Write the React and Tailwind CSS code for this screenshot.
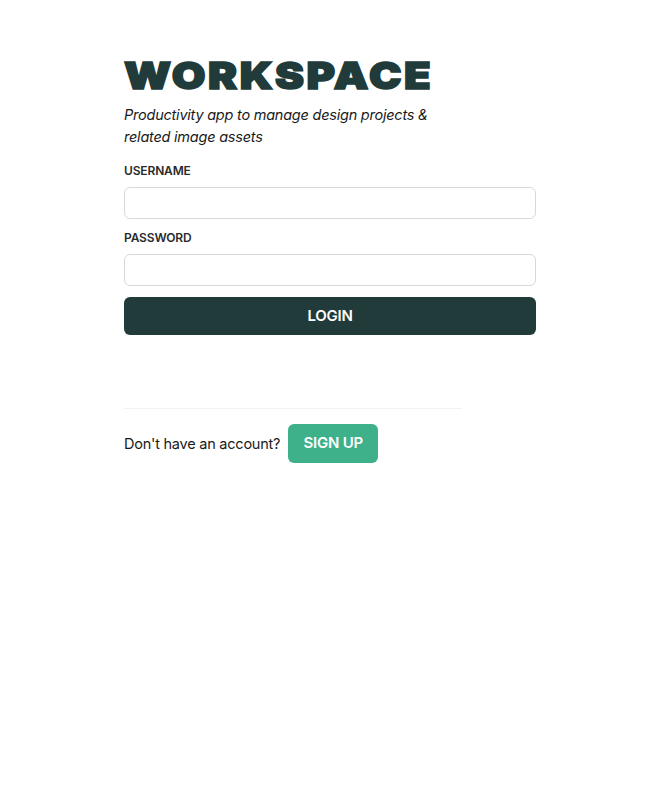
export default function App() {
  return (
    <div className="min-h-screen bg-white font-['Inter',sans-serif] text-[#1a1a1a]">
      <div className="w-[412px] ml-[124px] pt-[50px]">
        <h1 className="w-fit origin-left scale-x-[1.177] text-[37px] leading-[50px] font-black tracking-[2.2px] text-[#213b3a] [-webkit-text-stroke:1.6px_#213b3a] pt-[1px]">WORKSPACE</h1>
        <p className="mt-[3px] w-[330px] text-[14.5px] leading-[22px] tracking-[-0.23px] italic text-[#1a1a1a]">
          Productivity app to manage design projects &amp; related image assets
        </p>

        <form className="mt-[14px]" onSubmit={(e) => e.preventDefault()}>
          <label className="block text-[12px] leading-[16px] font-semibold tracking-[-0.15px] text-[#2b2b2b] pt-[1px]">USERNAME</label>
          <input type="text" className="block w-full h-[32px] mt-[8px] rounded-[6px] border-[1.5px] border-[#d8d8d8] bg-white" />
          <label className="block mt-[10px] text-[12px] leading-[16px] font-semibold tracking-[-0.15px] text-[#2b2b2b] pt-[1px]">PASSWORD</label>
          <input type="password" className="block w-full h-[32px] mt-[8px] rounded-[6px] border-[1.5px] border-[#d8d8d8] bg-white" />
          <button type="submit" className="block w-full h-[38.5px] mt-[10.5px] pt-[1px] rounded-[6px] bg-[#213b3a] text-white text-[15px] tracking-[-0.25px] font-semibold">
            LOGIN
          </button>
        </form>

        <hr className="mt-[73px] w-[338px] border-0 border-t border-[#f2f2f2]" />

        <div className="mt-[15px] flex items-center gap-[8px]">
          <span className="pt-[1px] text-[14.5px] tracking-[-0.23px] text-[#1a1a1a]">Don't have an account?</span>
          <button type="button" className="w-[90px] h-[38.5px] rounded-[6px] bg-[#3eb08a] text-white text-[15px] tracking-[-0.25px] font-semibold">
            SIGN UP
          </button>
        </div>
      </div>
    </div>
  )
}
